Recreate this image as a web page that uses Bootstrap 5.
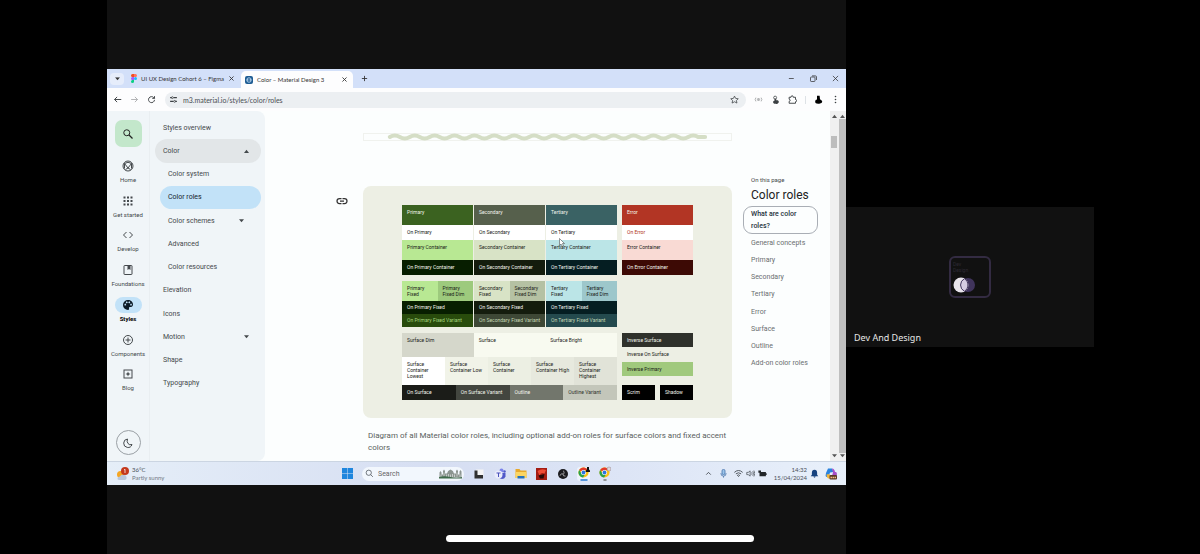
<!DOCTYPE html>
<html lang="en">
<head>
<meta charset="utf-8">
<meta name="viewport" content="width=device-width, initial-scale=1">
<title>Color – Material Design 3</title>
<link href="https://cdn.jsdelivr.net/npm/bootstrap@5.3.0/dist/css/bootstrap.min.css" rel="stylesheet">
<script src="https://cdn.jsdelivr.net/npm/bootstrap@5.3.0/dist/js/bootstrap.bundle.min.js" defer></script>
<style>
body{background:#000;font-family:Roboto,"Liberation Sans",sans-serif;font-size:7px;line-height:12px;color:#44494c;min-height:100vh}
svg{display:block;flex:none}
a{color:inherit;text-decoration:none}
button{border:0;background:none;padding:0;color:inherit;display:flex;align-items:center;justify-content:center}
.i{width:9px;height:9px;fill:none;stroke:currentColor;stroke-width:2}
.i.xs{width:7px;height:7px;stroke-width:3}
.i.lg{width:12px;height:12px}
.f{fill:currentColor;stroke:none}
.side-l{flex:107 1 0}
.share{flex:739 1 0;min-width:0;background:#111}
.side-r{flex:354 1 0}
/* browser */
.tabs{height:19px;background:#d3e0f9;padding-left:3px;color:#333;font:6px/12px Lato,sans-serif}
.tabs .chev{width:14px;height:12px;border-radius:4px;background:#e6edfb}
.tab-a{width:117px;padding:0 7px 0 7px}
.tab-b{width:112px;height:17px;padding:0 5px 0 4px;background:#fdfdfe;border-radius:5px 5px 0 0}
.winctl{gap:13px;padding-right:6px}
.bar{height:23px;background:#fdfdfe;padding:0 6px;gap:8px;color:#3c4043}
.omni{height:16px;border-radius:8px;background:#eceff2;padding:0 7px 0 4px;margin-left:1px;gap:5px}
.omni input{border:0;background:none;font:7px/12px Lato,sans-serif;height:12px;padding:0;color:#4a4e52;min-width:0;outline:0}
.page{background:#fcfefe}
.rail{width:43px;background:#f0f5f8;border-right:1px solid #e9eef1;padding:9px 0 6px;font-size:6px;line-height:8px}
.rail .find{width:27px;height:27px;border-radius:7px;background:#c3e7cb;color:#222}
.rail .items{height:243px;margin-top:13px}
.rail .items a{gap:4px}
.rail .i{width:12px;height:12px}
.chip{width:27px;height:16px;border-radius:8px;margin:-2px 0}
.chip.on{background:#c2e2f8;color:#0b1a26}
.moon{width:25px;height:25px;border:1px solid #9aa0a5;border-radius:50%;margin-top:27px}
.tree{width:115px;background:#f0f5f8;padding:5px 4px 0 5px;border-radius:0 8px 8px 0}
.tree ul{height:279px}
.tree li{padding:0 12px 0 8px;border-radius:12px}
.tree .sub{margin-left:5px}
.tree .sub.sch{padding-right:17px}
.tree .open{background:#e2e6e8}
.tree .cur{background:#c2e2f8;color:#14232e}
.gut{width:98px;padding:84px 15px 0 0;color:#333}
.main-col{min-width:0}
.strip{margin-top:22px;height:8px;border:1px solid #f0f2ee}
.strip svg{width:100%;height:8px;margin-top:-1px}
.board{margin-top:45px;background:#edefe4;border-radius:8px;padding:19px 39px 18px;font-size:5px;line-height:6px;color:#1b1c18}
.cap{padding:12px 5px 0;color:#5a5e60;min-height:43px;font-size:8px;line-height:12px}
.toc{width:98px;padding:64px 12px 0 11px}
.toc h1{font-size:12px;line-height:20px;font-weight:400;color:#222;padding-left:8px;margin:0 0 1px}
.toc .otp{font-size:6px;line-height:10px;padding-left:8px}
.toc .act{border:1px solid #a9aeb5;border-radius:9px;padding:1px 7px;color:#26313c;font-weight:500}
.toc .list{height:138px;padding-left:8px;color:#6a6e70}
.sb{width:8px;background:#f0f0f0;color:#555;padding:3px 0}
.sb .t1{width:6px;height:12px;background:#bdbdbd;margin-top:18px}
.sb .t2{width:7px;background:#bfbfbf;margin:1px 0}
.tri{width:5px;height:4px;fill:currentColor}
/* swatches */
.sw{padding:4px 0 0 5px;white-space:nowrap;min-width:0}
.h20{height:20px}.h15{height:15px}.h13{height:13px;padding-top:3px}.h24{height:24px}.h28{height:28px}.h14{height:14px}
.g1{gap:1px}.g5{gap:5px}.g6{gap:6px}
.w3{flex:215 1 0}.w1{flex:71 1 0}
.w3>*>*,.eq>*{flex:1 1 0}
.wt{color:#f2f4ec}
.p{background:#3b6220}.s{background:#56604c}.t{background:#3a6264}.e{background:#b23524}
.onx{background:#fff}.pc{background:#b8e893}.sc{background:#d8e3c6}.tc{background:#bbe5e7}.ec{background:#f9dad4}
.one{color:#b23524}
.opc{background:#071e00}.osc{background:#141c0d}.otc{background:#051e22}.oec{background:#3d0a05}
.pd{background:#9dca7d}.sd{background:#b5c1a3}.td{background:#9dc7cb}
.vars{color:#c5d8b5}
.pv{background:#284b0c;color:#a5d67f}.sv{background:#3e4836}.tv{background:#244a4e}
.u1{background:#d5d7cb}.u2{background:#f8faf0}.c2{background:#f1f3e8}.c3{background:#ecefe3}.c4{background:#e7e9de}.c5{background:#e1e3d8}
.o1{background:#1b1c18}.o2{background:#43463f}.o3{background:#72766c}.o4{background:#c3c6ba;color:#30332c}
.inv{background:#2f312b}.ip{background:#a0c97d}.bk{background:#000}
.ptr{left:157px;top:33px;width:6px;height:9px}
/* taskbar */
.task{height:24px;background:linear-gradient(90deg,#e5eef8,#d6def2 45%,#dde5f6 70%,#e8f0fa);border-top:1px solid #cbd5e2;font:6px/8px Lato,sans-serif;color:#4a5058}
.task .wing{flex:1 1 0}
.task .wx{padding-left:9px;gap:3px}
.task .srch{width:102px;height:14px;border-radius:7px;background:#f2f7fd;padding:0 2px 0 3px;gap:4px}
.task .srch input{border:0;background:none;outline:0;font:7px/10px Roboto,sans-serif;height:10px;padding:0;width:60px;min-width:0;color:#555}
.task .srch input::placeholder{color:#666}
.apps{gap:8px}
.apps .start{margin-right:1px}
.ic{width:13px;height:14px}
.on-app{background:#edf3fc;border-radius:3px}
.tray{gap:3px;padding-right:9px}
.tray .gap-r{margin-right:3px}
.cam{width:70%;aspect-ratio:16/9;background:#111}
.cam .who{left:8px;bottom:2px;font:9px/14px "Noto Sans",sans-serif;color:#e6e6e6}
.logo{width:42px;height:42px;border:2px solid #332b42;border-radius:6px;font-size:5px;line-height:6px;color:#2d2a33;padding:3px 2px}
.home{left:0;right:0;bottom:12px;margin:auto;width:25.7vw;height:7px;border-radius:4px;background:#fff}
</style>
</head>
<body class="d-flex position-relative">
<svg width="0" height="0" class="position-absolute">
<symbol id="x" viewBox="0 0 24 24"><path d="M5 5l14 14M19 5L5 19"/></symbol>
<symbol id="dn" viewBox="0 0 8 6"><path d="M0 0h8L4 5z"/></symbol>
<symbol id="up" viewBox="0 0 8 6"><path d="M0 6h8L4 1z"/></symbol>
<symbol id="chrome" viewBox="0 0 24 24"><circle cx="12" cy="12" r="11" fill="#fbc116"/><path d="M12 12L2.500 6.500A11 11 0 0 1 21.500 6.500L12 7z" fill="#e33b2e"/><path d="M2.500 6.500A11 11 0 0 0 11 23L16 14.500 7.500 14z" fill="#2ba24c"/><circle cx="12" cy="12" r="5.500" fill="#fff"/><circle cx="12" cy="12" r="4.200" fill="#2f75e0"/></symbol>
</svg>
<div class="side-l"></div>
<main class="share d-flex flex-column justify-content-center">
<div>
 <header class="tabs d-flex align-items-center">
  <button class="chev" aria-label="Search tabs"><svg class="tri" viewBox="0 0 8 6"><use href="#dn"/></svg></button>
  <div class="tab-a d-flex align-items-center gap-1">
   <svg width="6" height="9" viewBox="0 0 12 18"><path d="M3 0h3v6H3a3 3 0 0 1 0-6z" fill="#f24e1e"/><path d="M6 0h3a3 3 0 0 1 0 6H6z" fill="#ff7262"/><path d="M3 6h3v6H3a3 3 0 0 1 0-6z" fill="#a259ff"/><circle cx="9" cy="9" r="3" fill="#1abcfe"/><path d="M3 12h3v3a3 3 0 1 1-3-3z" fill="#0acf83"/></svg>
   <span class="text-nowrap">UI UX Design Cohort 6 – Figma</span>
   <button class="ms-auto" aria-label="Close tab"><svg class="i xs"><use href="#x"/></svg></button>
  </div>
  <div class="tab-b d-flex align-items-center align-self-end gap-1">
   <svg width="8" height="8" viewBox="0 0 16 16"><rect width="16" height="16" rx="4" fill="#1d5c93"/><circle cx="8" cy="8" r="4.500" fill="none" stroke="#d4eaff" stroke-width="1.500"/><path d="M5 10V6l3 3 3-3v4" fill="none" stroke="#d4eaff"/></svg>
   <span class="text-nowrap">Color – Material Design 3</span>
   <button class="ms-auto" aria-label="Close tab"><svg class="i xs"><use href="#x"/></svg></button>
  </div>
  <button class="ms-1 ps-1" aria-label="New tab"><svg class="i xs" viewBox="0 0 24 24"><path d="M12 3v18M3 12h18"/></svg></button>
  <div class="winctl d-flex ms-auto">
   <button aria-label="Minimize"><svg class="i" viewBox="0 0 24 24"><path d="M5 12h13"/></svg></button>
   <button aria-label="Restore"><svg class="i" viewBox="0 0 24 24"><rect x="4" y="8" width="12" height="12" rx="2"/><path d="M8 5h9q3 0 3 3v8"/></svg></button>
   <button aria-label="Close"><svg class="i"  viewBox="0 0 24 24"><use href="#x"/></svg></button>
  </div>
 </header>
 <div class="bar d-flex align-items-center">
  <button aria-label="Back"><svg class="i" viewBox="0 0 24 24"><path d="M22 12H4M11 5l-7 7 7 7" stroke-width="2.500"/></svg></button>
  <button aria-label="Forward" class="opacity-50"><svg class="i" viewBox="0 0 24 24"><path d="M3 12h17M13 5l7 7-7 7"/></svg></button>
  <button aria-label="Reload"><svg class="i" viewBox="0 0 24 24"><path d="M20 13a8 8 0 1 1-2-6l2 2M20 3v6h-6" stroke-width="2.500"/></svg></button>
  <div class="omni d-flex align-items-center flex-fill">
   <svg class="i" viewBox="0 0 24 24"><path d="M3 7h4M12 7h9M3 17h9M17 17h4" stroke-width="3"/><circle cx="9" cy="7" r="2.500"/><circle cx="15" cy="17" r="2.500"/></svg>
   <input class="flex-fill" aria-label="Address" value="m3.material.io/styles/color/roles">
   <button aria-label="Bookmark"><svg class="i" viewBox="0 0 24 24"><path d="M12 3l3 6 7 1-5 4.500 1.500 7L12 18l-6.500 3.500L7 14.500 2 10l7-1z"/></svg></button>
  </div>
  <button aria-label="Cast extension" class="opacity-50"><svg class="i" viewBox="0 0 24 24"><path d="M5 7q-4 5 0 10M19 7q4 5 0 10M9 9v6M12 8v8M15 9v6"/></svg></button>
  <button aria-label="Extension"><svg class="i" viewBox="0 0 24 24"><circle cx="11" cy="7" r="4"/><path class="f" d="M9 10h5v4h4a5 5 0 0 1-5 9H9a4 4 0 0 1-2-7l3-2z"/></svg></button>
  <button aria-label="Extensions"><svg class="i" viewBox="0 0 24 24"><path d="M3 6h5q0-4 3-4t3 4h6v6q3 0 3 3t-3 3v4H3v-5q3-1 3-3t-3-3z" stroke-width="2.500"/></svg></button>
  <span class="border-start py-1"></span>
  <button aria-label="Profile"><svg class="i text-black" viewBox="0 0 24 24"><path class="f" d="M8 2h7l1 9q6 3 6 7t-8 5Q3 24 3 18t5-6z"/></svg></button>
  <button aria-label="Menu"><svg class="i" viewBox="0 0 24 24"><g class="f"><circle cx="12" cy="4" r="2.200"/><circle cx="12" cy="12" r="2.200"/><circle cx="12" cy="20" r="2.200"/></g></svg></button>
 </div>
 <div class="page d-flex">
  <nav class="rail d-flex flex-column align-items-center flex-shrink-0">
   <button class="find" aria-label="Search"><svg class="i" viewBox="0 0 24 24"><circle cx="9.500" cy="9.500" r="6"/><path d="M14 14l7 7" stroke-width="2.500"/></svg></button>
   <div class="items d-flex flex-column">
    <a href="#" class="d-flex flex-column align-items-center flex-fill"><span class="chip d-flex align-items-center justify-content-center"><svg class="i" viewBox="0 0 24 24"><circle cx="12" cy="12" r="10"/><path d="M5 17V7l7 9 7-9v10M5 7q7-5 14 0M7 19l5-3 5 3"/></svg></span>Home</a>
    <a href="#" class="d-flex flex-column align-items-center flex-fill"><span class="chip d-flex align-items-center justify-content-center"><svg class="i" viewBox="0 0 24 24"><path d="M3 5h18M3 12h18M3 19h18" stroke-width="4" stroke-dasharray="4 3"/></svg></span>Get started</a>
    <a href="#" class="d-flex flex-column align-items-center flex-fill"><span class="chip d-flex align-items-center justify-content-center"><svg class="i" viewBox="0 0 24 24"><path d="M9 6l-6 6 6 6M15 6l6 6-6 6"/></svg></span>Develop</a>
    <a href="#" class="d-flex flex-column align-items-center flex-fill"><span class="chip d-flex align-items-center justify-content-center"><svg class="i" viewBox="0 0 24 24"><rect x="4" y="3" width="16" height="18" rx="1"/><path class="f" d="M11 3h6v9l-3-2-3 2z"/></svg></span>Foundations</a>
    <a href="#" class="d-flex flex-column align-items-center flex-fill fw-bold text-black"><span class="chip on d-flex align-items-center justify-content-center"><svg class="i" viewBox="0 0 24 24"><path fill="currentColor" stroke="none" fill-rule="evenodd" d="M12 2a10 10 0 1 0 0 20c2 0 2.500-1.500 2-3-.5-2 .5-3 2-3h2c2 0 4-2 4-5 0-5-4.500-9-10-9zM6.500 13a1.700 1.700 0 1 1 .1 0zM9.500 8.500a1.700 1.700 0 1 1 .1 0zM14.500 8.500a1.700 1.700 0 1 1 .1 0zM18 13a1.700 1.700 0 1 1 .1 0z"/></svg></span>Styles</a>
    <a href="#" class="d-flex flex-column align-items-center flex-fill"><span class="chip d-flex align-items-center justify-content-center"><svg class="i" viewBox="0 0 24 24"><circle cx="12" cy="12" r="9"/><path d="M12 7v10M7 12h10"/></svg></span>Components</a>
    <a href="#" class="d-flex flex-column align-items-center flex-fill"><span class="chip d-flex align-items-center justify-content-center"><svg class="i" viewBox="0 0 24 24"><rect x="4" y="4" width="16" height="16"/><path class="f" d="M12 7l1.500 3.500L17 12l-3.500 1.500L12 17l-1.500-3.500L7 12l3.500-1.500z"/></svg></span>Blog</a>
   </div>
   <button class="moon" aria-label="Dark theme"><svg class="i" viewBox="0 0 24 24"><path d="M11 4a8.500 8.500 0 1 0 9 11q-5 2-8-2t-1-9z"/></svg></button>
  </nav>
  <nav class="tree flex-shrink-0">
   <ul class="list-unstyled d-flex flex-column mb-0">
    <li class="d-flex align-items-center flex-fill"><a href="#">Styles overview</a></li>
    <li class="open d-flex align-items-center justify-content-between flex-fill"><a href="#">Color</a><svg class="tri"><use href="#up"/></svg></li>
    <li class="sub d-flex align-items-center flex-fill"><a href="#">Color system</a></li>
    <li class="sub cur d-flex align-items-center flex-fill"><a href="#">Color roles</a></li>
    <li class="sub sch d-flex align-items-center justify-content-between flex-fill"><a href="#">Color schemes</a><svg class="tri"><use href="#dn"/></svg></li>
    <li class="sub d-flex align-items-center flex-fill"><a href="#">Advanced</a></li>
    <li class="sub d-flex align-items-center flex-fill"><a href="#">Color resources</a></li>
    <li class="d-flex align-items-center flex-fill"><a href="#">Elevation</a></li>
    <li class="d-flex align-items-center flex-fill"><a href="#">Icons</a></li>
    <li class="d-flex align-items-center justify-content-between flex-fill"><a href="#">Motion</a><svg class="tri"><use href="#dn"/></svg></li>
    <li class="d-flex align-items-center flex-fill"><a href="#">Shape</a></li>
    <li class="d-flex align-items-center flex-fill"><a href="#">Typography</a></li>
   </ul>
  </nav>
  <div class="gut d-flex justify-content-end align-items-start flex-shrink-0"><a href="#" aria-label="Link to section"><svg class="i lg" viewBox="0 0 24 24"><path d="M11 7H7a5 5 0 0 0 0 10h4M13 7h4a5 5 0 0 1 0 10h-4M8 12h8" stroke-width="2.500"/></svg></a></div>
  <article class="main-col flex-fill">
   <div class="strip"><svg viewBox="0 0 369 8" fill="none" stroke="#d5dec6" stroke-width="4" stroke-linecap="round"><path d="M26 4q5-3 10 0t10 0t10 0t10 0t10 0t10 0t10 0t10 0t10 0t10 0t10 0t10 0t10 0t10 0t10 0t10 0t10 0t10 0t10 0t10 0t10 0t10 0t10 0t10 0t10 0t10 0t10 0t10 0t10 0t10 0t10 0h7"/></svg></div>
   <figure class="mb-0">
   <div class="board d-flex flex-column g6">
    <div class="d-flex g5">
     <div class="w3 position-relative">
      <div class="d-flex g1 wt"><div class="sw h20 p">Primary</div><div class="sw h20 s">Secondary</div><div class="sw h20 t">Tertiary</div></div>
      <div class="d-flex g1"><div class="sw h15 onx">On Primary</div><div class="sw h15 onx">On Secondary</div><div class="sw h15 onx">On Tertiary</div></div>
      <div class="d-flex g1"><div class="sw h20 pc">Primary Container</div><div class="sw h20 sc">Secondary Container</div><div class="sw h20 tc">Tertiary Container</div></div>
      <div class="d-flex g1 wt"><div class="sw h15 opc">On Primary Container</div><div class="sw h15 osc">On Secondary Container</div><div class="sw h15 otc">On Tertiary Container</div></div>
      <svg class="ptr position-absolute" viewBox="0 0 12 18"><path d="M1 1v14l3-3 3 5 2-1-2-5h4z" fill="#fff" stroke="#333"/></svg>
     </div>
     <div class="w1"><div class="sw h20 e wt">Error</div><div class="sw h15 onx one">On Error</div><div class="sw h20 ec">Error Container</div><div class="sw h15 oec wt">On Error Container</div></div>
    </div>
    <div class="d-flex g5">
     <div class="w3">
      <div class="d-flex g1">
       <div class="d-flex eq"><div class="sw h20 pc">Primary<br>Fixed</div><div class="sw h20 pd">Primary<br>Fixed Dim</div></div>
       <div class="d-flex eq"><div class="sw h20 sc">Secondary<br>Fixed</div><div class="sw h20 sd">Secondary<br>Fixed Dim</div></div>
       <div class="d-flex eq"><div class="sw h20 tc">Tertiary<br>Fixed</div><div class="sw h20 td">Tertiary<br>Fixed Dim</div></div>
      </div>
      <div class="d-flex g1 wt"><div class="sw h13 opc">On Primary Fixed</div><div class="sw h13 osc">On Secondary Fixed</div><div class="sw h13 otc">On Tertiary Fixed</div></div>
      <div class="d-flex g1 vars"><div class="sw h13 pv">On Primary Fixed Variant</div><div class="sw h13 sv">On Secondary Fixed Variant</div><div class="sw h13 tv">On Tertiary Fixed Variant</div></div>
     </div>
     <div class="w1"></div>
    </div>
    <div class="d-flex g5">
     <div class="w3">
      <div class="d-flex"><div class="sw h24 u1">Surface Dim</div><div class="sw h24 u2">Surface</div><div class="sw h24 u2">Surface Bright</div></div>
      <div class="d-flex"><div class="sw h28 onx">Surface<br>Container<br>Lowest</div><div class="sw h28 c2">Surface<br>Container Low</div><div class="sw h28 c3">Surface<br>Container</div><div class="sw h28 c4">Surface<br>Container High</div><div class="sw h28 c5">Surface<br>Container<br>Highest</div></div>
      <div class="d-flex wt"><div class="sw h15 o1">On Surface</div><div class="sw h15 o2">On Surface Variant</div><div class="sw h15 o3">Outline</div><div class="sw h15 o4">Outline Variant</div></div>
     </div>
     <div class="w1 d-flex flex-column">
      <div class="sw h14 inv wt">Inverse Surface</div><div class="sw h15">Inverse On Surface</div><div class="sw h14 ip">Inverse Primary</div>
      <div class="d-flex g5 eq mt-auto wt"><div class="sw h15 bk">Scrim</div><div class="sw h15 bk">Shadow</div></div>
     </div>
    </div>
   </div>
   <figcaption class="cap">Diagram of all Material color roles, including optional add-on roles for surface colors and fixed accent colors</figcaption>
   </figure>
  </article>
  <aside class="toc flex-shrink-0">
   <div class="otp">On this page</div>
   <h1>Color roles</h1>
   <a href="#" class="act d-block">What are color<br>roles?</a>
   <div class="list d-flex flex-column">
    <a href="#" class="d-flex align-items-center flex-fill">General concepts</a><a href="#" class="d-flex align-items-center flex-fill">Primary</a><a href="#" class="d-flex align-items-center flex-fill">Secondary</a><a href="#" class="d-flex align-items-center flex-fill">Tertiary</a><a href="#" class="d-flex align-items-center flex-fill">Error</a><a href="#" class="d-flex align-items-center flex-fill">Surface</a><a href="#" class="d-flex align-items-center flex-fill">Outline</a><a href="#" class="d-flex align-items-center flex-fill">Add-on color roles</a>
   </div>
  </aside>
  <div class="sb d-flex flex-column align-items-center flex-shrink-0"><svg class="tri"><use href="#up"/></svg><div class="t1"></div><svg class="tri mt-auto"><use href="#dn"/></svg></div>
  <div class="sb d-flex flex-column align-items-center flex-shrink-0"><svg class="tri"><use href="#up"/></svg><div class="t2 flex-fill"></div><svg class="tri"><use href="#dn"/></svg></div>
 </div>
 <footer class="task d-flex align-items-center">
  <div class="wing wx d-flex align-items-center">
   <svg width="13" height="14" viewBox="0 0 26 28"><circle cx="9" cy="15" r="7" fill="#f5a623"/><path d="M3 24q0-5 5-5 2-5 7-3 5-1 6 4 1 5-4 6H7q-4 0-4-2z" fill="#b9c7da"/><circle cx="18" cy="8" r="8" fill="#c4391d"/><path d="M16 6l2-1.500V12" stroke="#fff" stroke-width="1.500" fill="none"/></svg>
   <div class="text-nowrap"><div>36°C</div><div class="opacity-75">Partly sunny</div></div>
  </div>
  <div class="apps d-flex align-items-center">
   <button class="start" aria-label="Start"><svg width="11" height="11" viewBox="0 0 22 22" fill="#1f86dd"><path d="M0 0h10.500v10.500H0zM11.500 0H22v10.500H11.500zM0 11.500h10.500V22H0zM11.500 11.500H22V22H11.500z"/></svg></button>
   <label class="srch d-flex align-items-center"><svg class="i" viewBox="0 0 24 24"><circle cx="10" cy="10" r="7"/><path d="M15 15l6 6"/></svg><input placeholder="Search" aria-label="Search"><svg class="ms-auto" width="23" height="11" viewBox="0 0 46 22"><path d="M1 19V9l2-3 2 3v4h3V6l2-3 2 3v5h4q1-6 7-8 6 2 7 8h4V6l2-3 2 3v7h3V7l2-3 2 3v12z" fill="#8b9490"/><path d="M4 18v-5M10 17V9M15 18v-5M19 18v-6M23 18v-5M27 18v-6M31 18v-5M36 17V9M42 18v-5" stroke="#e4e9e6" stroke-width="1.300"/><path d="M0 18q11-3 23 0t23 0v3H0z" fill="#3f6b4b"/></svg></label>
   <button class="ic" aria-label="Task view"><svg width="10" height="10" viewBox="0 0 20 20"><rect x="4" y="1" width="15" height="12" fill="#f4f4f4"/><path d="M1 3h6v9h11v7H1z" fill="#30302f"/></svg></button>
   <button class="ic" aria-label="Teams"><svg width="12" height="12" viewBox="0 0 24 24"><circle cx="15" cy="5" r="4" fill="#7b83eb"/><circle cx="21" cy="7" r="2.500" fill="#5059c9"/><path d="M10 10h13v7q-2 5-7 5t-6-5z" fill="#5059c9"/><circle cx="9" cy="13" r="8" fill="#e9ecfb"/><path d="M5 10h8M9 10v8" stroke="#4b53bc" stroke-width="2"/></svg></button>
   <button class="ic" aria-label="Files"><svg width="12" height="11" viewBox="0 0 24 22"><path d="M1 2h8l2 3h12v15H1z" fill="#e8a92c"/><path d="M1 8h22v12H1z" fill="#fbd563"/><path d="M5 16h14v5H5z" fill="#2571bd"/></svg></button>
   <button class="ic" aria-label="App"><svg width="11" height="12" viewBox="0 0 22 24"><rect width="22" height="24" fill="#a41c12"/><path d="M3 6q8-6 17-2l-3 7q-7-3-10 4z" fill="#ef4a34"/><path d="M5 15l12-3-2 9H8z" fill="#260807"/></svg></button>
   <button class="ic" aria-label="OBS Studio"><svg width="10" height="10" viewBox="0 0 24 24"><circle cx="12" cy="12" r="12" fill="#1b1b1f"/><path d="M12 4a5 5 0 0 1 1 8M5 16a5 5 0 0 1 7-4M18 17a5 5 0 0 1-6-5" fill="none" stroke="#b8b8bc" stroke-width="2"/></svg></button>
   <button class="ic on-app" aria-label="Chrome, work profile"><svg width="12" height="15" viewBox="0 0 24 30"><use href="#chrome" width="22" height="24" y="1"/><path d="M18 2h4v5q3 2 2 5H15q0-4 3-5z" fill="#111"/><path d="M6 28h12" stroke="#2575cf" stroke-width="3" stroke-linecap="round"/></svg></button>
   <button class="ic" aria-label="Chrome"><svg width="12" height="15" viewBox="0 0 24 30"><use href="#chrome" width="22" height="24" y="1"/><circle cx="20" cy="6" r="4" fill="#e3d6da" stroke="#8b7f86"/><path d="M10 28h4" stroke="#777" stroke-width="3" stroke-linecap="round"/></svg></button>
  </div>
  <div class="wing tray d-flex align-items-center justify-content-end">
   <svg class="i gap-r" viewBox="0 0 24 24"><path d="M6 15l6-6 6 6" stroke-width="2.500"/></svg>
   <svg class="i gap-r" viewBox="0 0 24 24" color="#3b6ba5"><rect x="8" y="1" width="8" height="14" rx="4" fill="#9cc4ea"/><path d="M5 11q0 8 7 8t7-8M12 19v4"/></svg>
   <svg class="i" viewBox="0 0 24 24"><path d="M1 9q11-10 22 0M5 13q7-6 14 0M9 17q3-3 6 0l-3 3z" stroke-width="2.500"/></svg>
   <svg class="i" viewBox="0 0 24 24"><path d="M2 9h4l5-4v14l-5-4H2zM15 9q2 3 0 6M18 6q4 6 0 12M21 4q5 8 0 16"/></svg>
   <svg class="i text-dark" viewBox="0 0 24 24"><path class="f" d="M1 4h7v4h13v3h2v5h-2v3H4V10H1z"/></svg>
   <div class="text-end ps-1">14:32<br>15/04/2024</div>
   <svg class="i gap-r" viewBox="0 0 24 24" color="#15427f"><path class="f" d="M12 2q7 0 7 8v5l3 4H2l3-4v-5q0-8 7-8zM9 20h6q-1 3-3 3t-3-3z"/></svg>
   <svg width="12" height="12" viewBox="0 0 24 24"><path d="M6 1h8l3 7-7 1-3 9H3Q0 16 2 10z" fill="#2a83de"/><path d="M14 1q5 0 6 7h2q3 2 1 8l-3 6h-8l4-13z" fill="#a64fc9"/><path d="M3 13l6-1 3 9H7q-3 0-4-8z" fill="#f2b53a"/><rect x="9" y="14" width="15" height="9" rx="2" fill="#5b3b28"/><path d="M11 19h11" stroke="#f0bd80" stroke-width="3" stroke-dasharray="3 1"/></svg>
  </div>
 </footer>
</div>
</main>
<aside class="side-r d-flex align-items-center">
 <div class="cam position-relative d-flex align-items-center justify-content-center">
  <div class="logo">Dev<br>Design<svg width="24" height="16" viewBox="0 0 24 16" class="mt-1"><circle cx="15" cy="8" r="7" fill="#40345c"/><circle cx="8" cy="8" r="7.500" fill="#e9e5ec"/><path d="M11.500 1.700a7 7 0 0 0 0 12.600 7.500 7.500 0 0 0 0-12.600z" fill="#d5cce2" stroke="#40345c"/></svg></div>
  <div class="who position-absolute">Dev And Design</div>
 </div>
</aside>
<div class="home position-absolute"></div>
</body>
</html>
